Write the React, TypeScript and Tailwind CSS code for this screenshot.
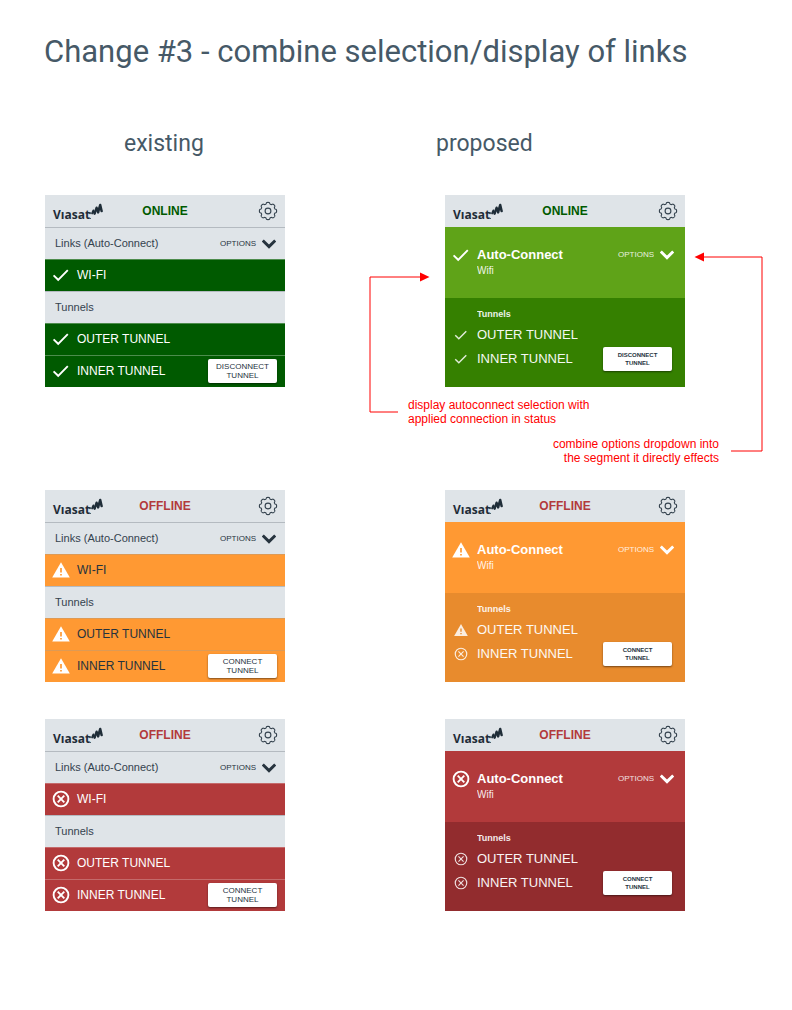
import type { ReactNode } from "react";

type State = "ok" | "warn" | "error";

interface Theme {
  status: string;
  statusText: string;
  row: string;
  rowText: string;
  divider: string;
  top: string;
  bottom: string;
  action: string;
}

const themes: Record<State, Theme> = {
  ok: {
    status: "ONLINE",
    statusText: "text-[#005a00]",
    row: "bg-[#005a00]",
    rowText: "text-white",
    divider: "border-[#4d8c4d]",
    top: "bg-[#5fa318]",
    bottom: "bg-[#358000]",
    action: "DISCONNECT",
  },
  warn: {
    status: "OFFLINE",
    statusText: "text-[#b23a3b]",
    row: "bg-[#ff9933]",
    rowText: "text-[#26333e]",
    divider: "border-[#dd9a55]",
    top: "bg-[#ff9933]",
    bottom: "bg-[#e88b2d]",
    action: "CONNECT",
  },
  error: {
    status: "OFFLINE",
    statusText: "text-[#b23a3b]",
    row: "bg-[#b23a3b]",
    rowText: "text-white",
    divider: "border-[#c46a6b]",
    top: "bg-[#b23a3b]",
    bottom: "bg-[#922c2e]",
    action: "CONNECT",
  },
};

const gearPath =
  Array.from({ length: 144 }, (_, i) => {
    const a = (i / 144) * Math.PI * 2;
    const r = 7.8 + 0.8 * Math.tanh(2 * (Math.cos(8 * a) + 0.25));
    return `${i ? "L" : "M"}${(10 + r * Math.cos(a)).toFixed(2)} ${(10 + r * Math.sin(a)).toFixed(2)}`;
  }).join("") + "Z";

function Gear() {
  return (
    <svg viewBox="0 0 20 20" className="size-5" fill="none" stroke="#34424e" strokeWidth="1.1" strokeLinejoin="round">
      <path d={gearPath} />
      <circle cx="10" cy="10" r="2.9" />
    </svg>
  );
}

function Chevron() {
  return (
    <svg viewBox="0 0 14 10" className="h-2.5 w-3.5" fill="none" stroke="currentColor" strokeWidth="2.9">
      <path d="M0.8 1.5L7 7.6L13.2 1.5" />
    </svg>
  );
}

function StateIcon({ state, small, cut }: { state: State; small?: boolean; cut: string }) {
  const size = small ? "size-3.5 opacity-85" : "size-[18px]";
  if (state === "ok") {
    return (
      <svg viewBox="0 0 18 18" className={size} fill="none" stroke="#fff" strokeWidth="1.9">
        <path d="M1.6 9.4L6.2 13.8L15.8 4.2" />
      </svg>
    );
  }
  if (state === "warn") {
    return (
      <svg viewBox="0 0 18 18" className={size}>
        <path d="M9 1.2L17.8 16.6H0.2Z" fill="#fff" />
        <path d="M9 7V11.4M9 12.9V14.6" stroke={cut} strokeWidth="1.7" />
      </svg>
    );
  }
  return (
    <svg viewBox="0 0 18 18" className={size} fill="none" stroke="#fff" strokeWidth={small ? 1.5 : 1.9}>
      <circle cx="9" cy="9" r="7.4" />
      <path d="M5.7 5.7L12.3 12.3M12.3 5.7L5.7 12.3" />
    </svg>
  );
}

function Logo() {
  return (
    <span className="flex items-end pt-0.5 text-[#1f2d38]">
      <span className="font-['Open_Sans',sans-serif] text-xs leading-3 font-bold">Vıasat</span>
      <svg
        viewBox="0 0 15 18"
        className="-ml-0.5 h-[18px] w-[15px]"
        fill="none"
        stroke="currentColor"
        strokeLinecap="round"
        strokeLinejoin="round"
      >
        <path d="M2 10.4V9.9" strokeWidth="1.6" />
        <path d="M4.1 10.4L5.4 7.4L6.6 10.6" strokeWidth="1.9" />
        <path d="M6.6 10.6L8.6 4.6L10.1 9.2" strokeWidth="2.3" />
        <path d="M10.1 9.2L12.2 2L13.6 8" strokeWidth="2.5" />
        <path d="M2.4 15.4V15.5" strokeWidth="0.9" />
      </svg>
    </span>
  );
}

function CardHeader({ theme }: { theme: Theme }) {
  return (
    <header className="grid h-8 grid-cols-[1fr_auto_1fr] items-center bg-[#dfe4e8] px-2">
      <Logo />
      <span className={`text-xs font-bold ${theme.statusText}`}>{theme.status}</span>
      <button type="button" aria-label="Settings" className="-mr-px justify-self-end">
        <Gear />
      </button>
    </header>
  );
}

function Row({ theme, state, children, action }: { theme: Theme; state: State; children: ReactNode; action?: boolean }) {
  return (
    <div
      className={`flex h-8 items-center border-t pr-2 pb-0.5 pl-[7px] text-xs ${theme.row} ${theme.rowText} ${theme.divider}`}
    >
      <span className="flex w-[25px]">
        <StateIcon state={state} cut="#ff9933" />
      </span>
      <span className="flex-1">{children}</span>
      {action && (
        <button
          type="button"
          className="flex h-6 w-[69px] flex-col items-center justify-center rounded-xs bg-white text-[8px] leading-[9px] text-[#26333e] shadow-[0_1px_2px_rgba(0,0,0,0.5)]"
        >
          <span>{theme.action}</span>
          <span>TUNNEL</span>
        </button>
      )}
    </div>
  );
}

function ExistingCard({ state }: { state: State }) {
  const theme = themes[state];
  const section =
    "flex h-8 items-center justify-between border-t border-[#b4bac0] bg-[#dfe4e8] pr-[9px] pl-2.5 text-[11px] text-[#34424e]";
  return (
    <section>
      <CardHeader theme={theme} />
      <div className={section}>
        <h3>Links (Auto-Connect)</h3>
        <button type="button" className="flex items-center gap-1.5 text-[8px] text-[#26333e]">
          OPTIONS
          <Chevron />
        </button>
      </div>
      <Row theme={theme} state={state}>WI-FI</Row>
      <div className={section}>
        <h3>Tunnels</h3>
      </div>
      <Row theme={theme} state={state}>OUTER TUNNEL</Row>
      <Row theme={theme} state={state} action>INNER TUNNEL</Row>
    </section>
  );
}

function ProposedCard({ state, inner }: { state: State; inner: State }) {
  const theme = themes[state];
  return (
    <section>
      <CardHeader theme={theme} />
      <div className={`h-[71px] pt-5 pr-[11px] pl-[7px] text-white ${theme.top}`}>
        <div className="flex h-4 items-center">
          <span className="flex w-[25px]">
            <StateIcon state={state} cut="#ff9933" />
          </span>
          <h3 className="flex-1 text-[13px] font-bold">Auto-Connect</h3>
          <button type="button" className="flex items-center gap-1.5 text-[8px]">
            <span className="opacity-85">OPTIONS</span>
            <Chevron />
          </button>
        </div>
        <p className="pl-[25px] text-[10px] leading-4 opacity-90">Wifi</p>
      </div>
      <div className={`h-[89px] pt-2 pr-[13px] pl-[7px] text-white ${theme.bottom}`}>
        <h4 className="mb-px pl-[25px] text-[9px] leading-4 font-bold opacity-90">Tunnels</h4>
        <div className="flex h-6 items-center text-[13px]">
          <span className="flex w-[25px] pl-0.5">
            <StateIcon state={state} small cut="#e88b2d" />
          </span>
          <span className="opacity-95">OUTER TUNNEL</span>
        </div>
        <div className="flex h-6 items-center text-[13px]">
          <span className="flex w-[25px] pl-0.5">
            <StateIcon state={inner} small cut="#e88b2d" />
          </span>
          <span className="flex-1 opacity-95">INNER TUNNEL</span>
          <button
            type="button"
            className="flex h-6 w-[69px] flex-col items-center justify-center rounded-xs bg-white text-[6px] leading-[8px] font-bold text-[#26333e] shadow-[0_1px_2px_rgba(0,0,0,0.5)]"
          >
            <span>{theme.action}</span>
            <span>TUNNEL</span>
          </button>
        </div>
      </div>
    </section>
  );
}

function Annotations() {
  return (
    <div className="pointer-events-none absolute top-0 -left-20 w-[400px] text-xs leading-[14px] text-[#ff0000]">
      <svg viewBox="0 0 400 270" className="w-full" fill="none" stroke="#ff0000">
        <path d="M33 217H5V82H56" />
        <path d="M366 256H397V62H338" />
        <path d="M55 77.6L64.5 82L55 86.4Z" fill="#ff0000" stroke="none" />
        <path d="M339 57.6L329.5 62L339 66.4Z" fill="#ff0000" stroke="none" />
      </svg>
      <p className="absolute top-[203px] left-[43px] whitespace-nowrap">
        display autoconnect selection with
        <br />
        applied connection in status
      </p>
      <p className="absolute top-[242px] right-[46px] text-right whitespace-nowrap">
        combine options dropdown into
        <br />
        the segment it directly effects
      </p>
    </div>
  );
}

export default function App() {
  return (
    <main className="min-h-screen bg-white pt-8 pb-24 font-['Liberation_Sans',Arial,sans-serif]">
      <h1 className="pl-11 font-[Roboto,sans-serif] text-[31px] leading-10 text-[#465967]">
        Change #3 - combine selection/display of links
      </h1>
      <div className="grid grid-cols-[312px_1fr] pt-14 pl-[124px] font-[Roboto,sans-serif] text-[23px] leading-8 text-[#465967]">
        <h2>existing</h2>
        <h2>proposed</h2>
      </div>
      <div className="grid grid-cols-[240px_240px] gap-x-40 pt-[35px] pl-[45px]">
        <ExistingCard state="ok" />
        <div className="relative pb-[103px]">
          <ProposedCard state="ok" inner="ok" />
          <Annotations />
        </div>
        <ExistingCard state="warn" />
        <div className="pb-[37px]">
          <ProposedCard state="warn" inner="error" />
        </div>
        <ExistingCard state="error" />
        <ProposedCard state="error" inner="error" />
      </div>
    </main>
  );
}
